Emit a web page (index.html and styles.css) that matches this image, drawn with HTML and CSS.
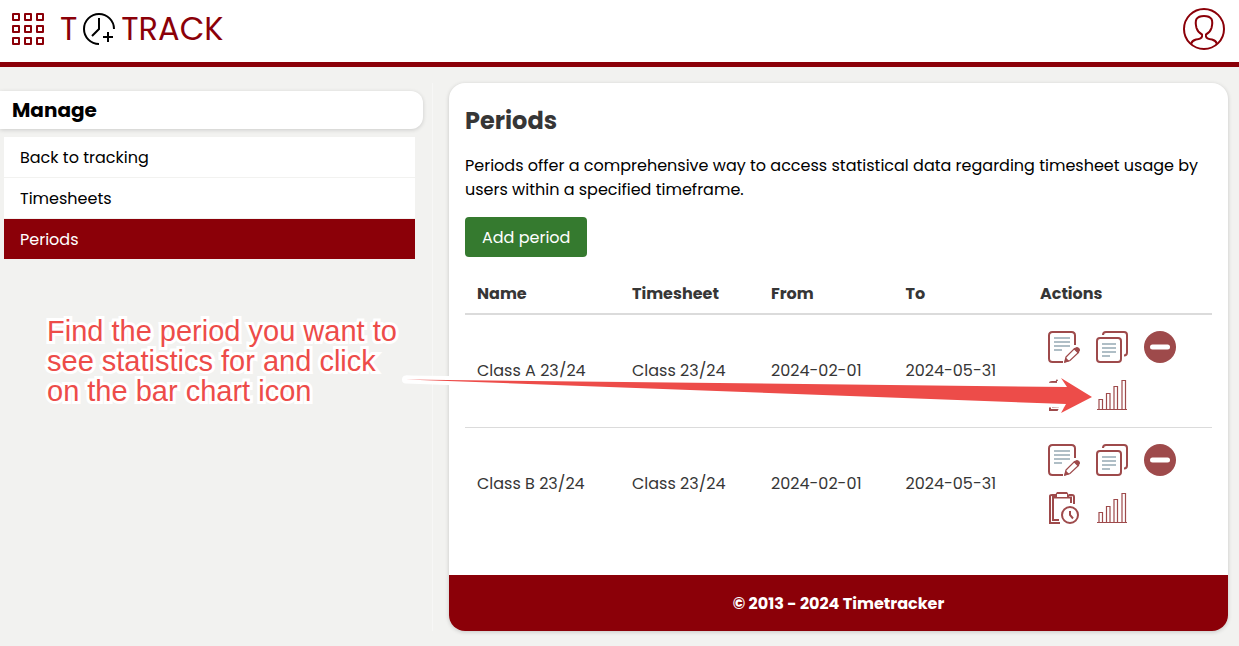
FILE: index.html
```html
<!DOCTYPE html>
<html lang="en">
<head>
<meta charset="utf-8">
<meta name="viewport" content="width=device-width, initial-scale=1">
<title>Periods</title>
<link rel="stylesheet" href="styles.css">
</head>
<body>
<svg class="sprite" aria-hidden="true">
  <symbol id="edit" viewBox="0 0 32 32">
    <path d="M27 14V4.500Q27 1 23.500 1H4.500Q1 1 1 4.500V27.500Q1 31 4.500 31H15" fill="none" stroke="#9e4a4b" stroke-width="2"/>
    <path d="M6 7H22M6 11H22M6 15H22M6 19H14" stroke="#afbec6" stroke-width="2"/>
    <path d="M18 26L26.500 17.500L30.500 21.500L22 29.500L16.800 31Z" fill="#fff" stroke="#9e4a4b" stroke-width="1.200"/>
    <path d="M16 32L17.700 26.500L21.500 30.300ZM25.500 18L28 16.200Q29.500 15.500 31 17Q32.600 18.500 31.700 20L30 22.500Z" fill="#9e4a4b"/>
  </symbol>
  <symbol id="copy" viewBox="0 0 32 32">
    <path d="M7 4Q7 1 10 1H28Q31 1 31 4V21.500Q31 24.500 28 24.500M4 7H22Q25 7 25 10V28Q25 31 22 31H4Q1 31 1 28V10Q1 7 4 7Z" fill="none" stroke="#9e4a4b" stroke-width="2"/>
    <path d="M6 13H20M6 17H20M6 21H20M6 25H14" stroke="#afbec6" stroke-width="2"/>
  </symbol>
  <symbol id="remove" viewBox="0 0 32 32">
    <circle cx="16" cy="16" r="16" fill="#9e4a4b"/>
    <rect x="6" y="13.500" width="20" height="5" rx="2.500" fill="#fff"/>
  </symbol>
  <symbol id="clip" viewBox="0 0 32 32">
    <path d="M12 31H2V4Q2 3 4 3H7V5H5V28H11M21 3H24Q26 3 26 5V12M5 5.500H23V11" fill="none" stroke="#9e4a4b" stroke-width="2"/>
    <path d="M7 6V3L9 0H19L21 3V6Z" fill="#9e4a4b"/>
    <path d="M9 2H19V5H9Z" fill="#fff"/>
    <circle cx="22" cy="23" r="8" fill="#fff" stroke="#9e4a4b" stroke-width="2"/>
    <path d="M22 19V23L25 26.500" fill="none" stroke="#9e4a4b" stroke-width="2"/>
  </symbol>
  <symbol id="chart" viewBox="0 0 32 32">
    <path d="M1 30.500H31M3 30V20.500H6.500V30M10.500 30V14.500H14V30M18 30V7.500H21.500V30M26 30V1.500H29.500V30" fill="none" stroke="#9e4a4b" stroke-width="1.200"/>
  </symbol>
</svg>

<header class="topbar">
  <button class="icon-button" type="button" aria-label="Menu">
    <svg width="32" height="32" viewBox="0 0 32 32" fill="none" stroke="#8b0008" stroke-width="2" aria-hidden="true">
      <path d="M1 1h6v6H1zM13 1h6v6h-6zM25 1h6v6h-6zM1 13h6v6H1zM13 13h6v6h-6zM25 13h6v6h-6zM1 25h6v6H1zM13 25h6v6h-6zM25 25h6v6h-6z" stroke-linejoin="round"/>
    </svg>
  </button>
  <a class="logo" href="#">
    <span>T</span>
    <svg width="32" height="32" viewBox="0 0 32 32" fill="none" stroke="#000" stroke-width="2" aria-hidden="true">
      <path d="M31 16A15 15 0 1 0 16 31M16 5V16L9 23M25 19V29M20 24H30"/>
    </svg>
    <span>TRACK</span>
  </a>
  <button class="icon-button account" type="button" aria-label="Account">
    <svg width="42" height="42" viewBox="0 0 42 42" fill="none" stroke="#8b0008" stroke-width="2" aria-hidden="true">
      <circle cx="21" cy="21" r="20"/>
      <path d="M8 36Q9 32.500 13 31.500Q18.500 31 19 28.500V26.500Q15 24.500 13.500 20Q12 14 13.500 11Q15.500 8 21 8Q26.500 8 28.500 11Q30 14 28.500 20Q27 24.500 23 26.500V28.500Q23.500 31 29 31.500Q33 32.500 34 36"/>
    </svg>
  </button>
</header>

<div class="layout">
  <aside class="sidebar">
    <h2 class="sidebar-title">Manage</h2>
    <nav class="menu">
      <a class="menu-item" href="#">Back to tracking</a>
      <a class="menu-item" href="#">Timesheets</a>
      <a class="menu-item active" href="#" aria-current="page">Periods</a>
    </nav>
  </aside>

  <div class="card">
    <main class="content">
      <h1 class="title">Periods</h1>
      <p class="intro">Periods offer a comprehensive way to access statistical data regarding timesheet usage by users within a specified timeframe.</p>
      <button class="add" type="button">Add period</button>
      <table class="periods">
        <colgroup>
          <col class="col-name"><col class="col-sheet"><col class="col-date"><col class="col-date"><col>
        </colgroup>
        <thead>
          <tr><th>Name</th><th>Timesheet</th><th>From</th><th>To</th><th>Actions</th></tr>
        </thead>
        <tbody>
          <tr>
            <td>Class A 23/24</td><td>Class 23/24</td><td>2024-02-01</td><td>2024-05-31</td>
            <td>
              <div class="actions">
                <button class="action" type="button" aria-label="Edit"><svg class="icon"><use href="#edit"/></svg></button>
                <button class="action" type="button" aria-label="Copy"><svg class="icon"><use href="#copy"/></svg></button>
                <button class="action" type="button" aria-label="Remove"><svg class="icon"><use href="#remove"/></svg></button>
                <button class="action" type="button" aria-label="Time reports"><svg class="icon"><use href="#clip"/></svg></button>
                <button class="action" type="button" aria-label="Statistics"><svg class="icon"><use href="#chart"/></svg></button>
              </div>
            </td>
          </tr>
          <tr>
            <td>Class B 23/24</td><td>Class 23/24</td><td>2024-02-01</td><td>2024-05-31</td>
            <td>
              <div class="actions">
                <button class="action" type="button" aria-label="Edit"><svg class="icon"><use href="#edit"/></svg></button>
                <button class="action" type="button" aria-label="Copy"><svg class="icon"><use href="#copy"/></svg></button>
                <button class="action" type="button" aria-label="Remove"><svg class="icon"><use href="#remove"/></svg></button>
                <button class="action" type="button" aria-label="Time reports"><svg class="icon"><use href="#clip"/></svg></button>
                <button class="action" type="button" aria-label="Statistics"><svg class="icon"><use href="#chart"/></svg></button>
              </div>
            </td>
          </tr>
        </tbody>
      </table>
    </main>
    <footer class="footer">© 2013 - 2024 Timetracker</footer>
  </div>
</div>

<p class="note">Find the period you want to<br>see statistics for and click<br>on the bar chart icon</p>
<svg class="arrow" width="700" height="52" viewBox="0 0 700 52" aria-hidden="true">
  <path d="M6 9.500L667 17L661 8L692 27L661 43L666 34Z" fill="#fff" stroke="#fff" stroke-width="8" stroke-linejoin="round"/>
  <path d="M6 9.500L667 17L661 8L692 27L661 43L666 34Z" fill="#ed4c49"/>
</svg>
</body>
</html>
```

FILE: styles.css
```css
* {
  box-sizing: border-box;
}

body {
  margin: 0;
  position: relative;
  min-height: 100vh;
  background: #f2f2f0;
  color: #000;
  font: 16px/24px Poppins, Inter, sans-serif;
}

a {
  color: inherit;
  text-decoration: none;
}

button {
  font: inherit;
  border: 0;
  cursor: pointer;
}

.sprite {
  display: none;
}

.topbar {
  display: flex;
  align-items: center;
  gap: 16px;
  padding: 8px 14px 12px 12px;
  background: #fff;
  border-bottom: 5px solid #8b0008;
}

.icon-button {
  display: flex;
  padding: 0;
  background: none;
}

.account {
  margin-left: auto;
}

.logo {
  display: flex;
  align-items: center;
  gap: 6px;
  color: #8b0008;
  font-size: 32px;
  line-height: 40px;
}

.layout {
  display: grid;
  grid-template-columns: 433fr 795fr;
  padding: 16px 11px 15px 0;
}

.sidebar {
  padding: 8px 9px 0 0;
  border-right: 1px solid #f7f7f6;
}

.sidebar-title {
  margin: 0;
  padding: 4px 12px;
  background: #fff;
  border-radius: 0 12px 12px 0;
  box-shadow: 0 1px 4px rgba(0, 0, 0, 0.16);
  font-size: 20px;
  line-height: 30px;
}

.menu {
  display: flex;
  flex-direction: column;
  gap: 1px;
  margin: 8px 8px 0 4px;
}

.menu-item {
  padding: 9px 16px 7px;
  background: #fff;
}

.menu-item.active {
  background: #8b0008;
  color: #fff;
}

.card {
  margin-left: 16px;
  overflow: hidden;
  background: #fff;
  border-radius: 16px;
  box-shadow: 0 1px 4px rgba(0, 0, 0, 0.18);
}

.content {
  padding: 17px 16px 35px;
}

.title {
  margin: 0 0 12px;
  color: #363636;
  font-size: 24px;
  line-height: 42px;
}

.intro {
  margin: 0 0 15px;
}

.add {
  display: block;
  margin-bottom: 16px;
  padding: 9px 17px 7px;
  background: #357a2f;
  border-radius: 4px;
  color: #fff;
}

.periods {
  width: 100%;
  table-layout: fixed;
  border-collapse: separate;
  border-spacing: 0;
  color: #363636;
}

.col-name {
  width: 155px;
}

.col-sheet {
  width: 139px;
}

.col-date {
  width: 18%;
}

.periods th,
.periods td {
  padding: 8px 12px;
  text-align: left;
}

.periods th {
  padding: 9px 12px 7px;
  border-bottom: 2px solid #dbdbdb;
}

.periods td {
  border-bottom: 1px solid #dbdbdb;
}

.periods tr:last-child td {
  border-bottom: 0;
}

.actions {
  display: flex;
  flex-wrap: wrap;
}

.action {
  padding: 8px;
  background: none;
}

.icon {
  display: block;
  width: 32px;
  height: 32px;
}

.footer {
  padding: 17px 16px 15px;
  background: #8b0008;
  color: #fff;
  font-weight: 700;
  text-align: center;
}

.note {
  position: absolute;
  left: 47px;
  top: 316px;
  margin: 0;
  color: #ed4c49;
  font: 29px/30px "Liberation Sans", Arial, sans-serif;
  -webkit-text-stroke: 6px #fff;
  paint-order: stroke fill;
  pointer-events: none;
}

.arrow {
  position: absolute;
  left: 400px;
  top: 370px;
  pointer-events: none;
}
```
